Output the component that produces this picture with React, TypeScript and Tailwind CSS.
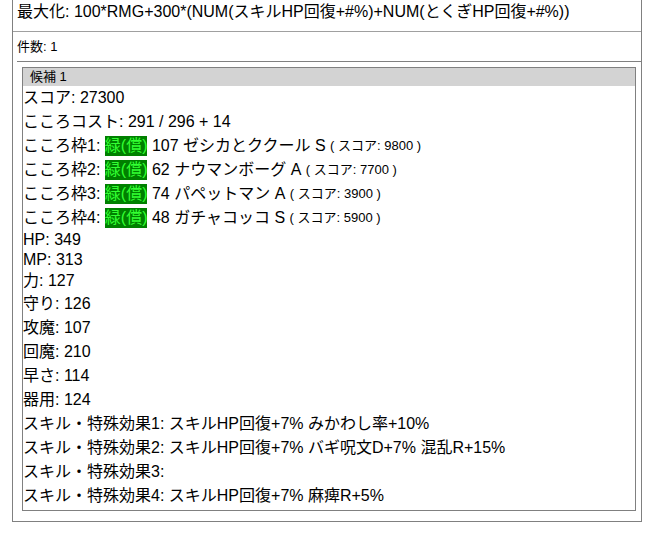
const font = "font-['Liberation_Sans','Noto_Sans_CJK_JP',sans-serif]";

type Slot = { n: number; cost: number; name: string; rank: string; score: number };

const slots: Slot[] = [
  { n: 1, cost: 107, name: "ゼシカとククール", rank: "S", score: 9800 },
  { n: 2, cost: 62, name: "ナウマンボーグ", rank: "A", score: 7700 },
  { n: 3, cost: 74, name: "パペットマン", rank: "A", score: 3900 },
  { n: 4, cost: 48, name: "ガチャコッコ", rank: "S", score: 5900 },
];

const stats: { label: string; value: string; h: string }[] = [
  { label: "HP", value: "349", h: "h-[20px]" },
  { label: "MP", value: "313", h: "h-[19px]" },
  { label: "力", value: "127", h: "h-[23px]" },
  { label: "守り", value: "126", h: "h-[24px]" },
  { label: "攻魔", value: "107", h: "h-[24px]" },
  { label: "回魔", value: "210", h: "h-[24px]" },
  { label: "早さ", value: "114", h: "h-[24px]" },
  { label: "器用", value: "124", h: "h-[24px]" },
];

const skills = [
  "スキルHP回復+7% みかわし率+10%",
  "スキルHP回復+7% バギ呪文D+7% 混乱R+15%",
  "",
  "スキルHP回復+7% 麻痺R+5%",
];

function Line({ children, h = "h-[24px]" }: { children: React.ReactNode; h?: string }) {
  return <div className={`${h} flex items-center whitespace-nowrap`}>{children}</div>;
}

export default function App() {
  return (
    <div className={`${font} text-black bg-white min-h-[535px] text-[16px]`}>
      <div className="ml-3 w-[630px] border-x border-b border-[#808080]">
        {/* formula */}
        <div className="h-[32px] border-b border-[#a0a0a0] pl-1 pt-[2px] leading-[20px] whitespace-nowrap">
          最大化: 100*RMG+300*(NUM(スキルHP回復+#%)+NUM(とくぎHP回復+#%))
        </div>

        {/* count */}
        <div className="ml-1 h-[30px] border-b border-[#808080] pt-[7px] text-[13px] leading-[16px]">
          件数: 1
        </div>

        {/* candidate */}
        <div className="ml-[9px] mt-[5px] mb-[10px] w-[614px] border border-[#808080] pb-[2px]">
          <div className="h-[18px] bg-[#d3d3d3] pl-[7px] text-[13px] leading-[18px]">候補 1</div>
          <Line>スコア: 27300</Line>
          <Line>こころコスト: 291 / 296 + 14</Line>
          {slots.map((s) => (
            <Line key={s.n}>
              こころ枠{s.n}:&nbsp;
              <span className="bg-[#008000] text-[#33ff33] leading-[20px]">緑(償)</span>
              &nbsp;{s.cost} {s.name} {s.rank}&nbsp;
              <span className="text-[13px]">( スコア: {s.score} )</span>
            </Line>
          ))}
          {stats.map((s) => (
            <Line key={s.label} h={s.h}>
              {s.label}: {s.value}
            </Line>
          ))}
          {skills.map((s, i) => (
            <Line key={i}>
              スキル・特殊効果{i + 1}: {s}
            </Line>
          ))}
        </div>
      </div>
    </div>
  );
}
